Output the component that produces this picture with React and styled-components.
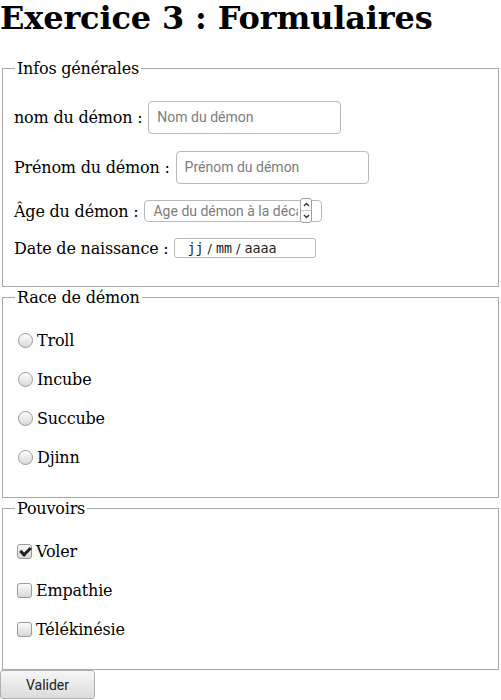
import React from 'react';
import styled, { createGlobalStyle } from 'styled-components';

const GlobalStyle = createGlobalStyle`
  body {
    margin: 0;
    background: #fff;
    color: #000;
    font-family: "DejaVu Serif", serif;
    font-size: 16px;
    letter-spacing: -0.2px;
  }
`;

const Title = styled.h1`
  font-size: 32px;
  font-weight: bold;
  margin: 0 0 21px 0;
  line-height: 37px;
  letter-spacing: -0.15px;
`;

const Fieldset = styled.fieldset`
  margin: 0 2px;
  padding: 5px 12px 12px 11px;
  border: 1px solid #a9a9a9;
  border-radius: 0;
`;

const Legend = styled.legend`
  padding: 0 2px;
  margin-left: 1px;
  font-size: 16px;
  line-height: 21px;
`;

const Line = styled.p`
  margin: 16px 0;
  display: flex;
  align-items: center;
  gap: 6px;
  min-height: ${(p) => p.$h || 20}px;
`;

const Choice = styled.p`
  margin: 16px 0;
  display: flex;
  align-items: center;
  min-height: 23px;
`;

const TextInput = styled.input`
  font-family: "Roboto", "DejaVu Sans", sans-serif;
  font-size: 14px;
  letter-spacing: 0;
  width: ${(p) => p.$w || 193}px;
  height: ${(p) => p.$h || 33}px;
  box-sizing: border-box;
  padding: 0 8px;
  margin: 0;
  border: 1px solid #b8b8b8;
  border-radius: 4px;
  background: #fff;
  color: #222;
  &::placeholder {
    color: #7d7d7d;
  }
`;

const NumberWrap = styled.span`
  position: relative;
  display: inline-flex;
`;

const NumberInput = styled(TextInput)`
  padding: 0 23px 0 8px;
  -moz-appearance: textfield;
  &::-webkit-inner-spin-button,
  &::-webkit-outer-spin-button {
    -webkit-appearance: none;
    margin: 0;
  }
`;

const Spinner = styled.span`
  position: absolute;
  right: 10px;
  top: -2px;
  width: 12px;
  height: 25px;
  display: flex;
  flex-direction: column;
  border: 1px solid #a0a0a0;
  border-radius: 3px;
  background: #fff;
  box-sizing: border-box;
  overflow: hidden;
`;

const SpinHalf = styled.span`
  flex: 1;
  display: flex;
  align-items: center;
  justify-content: center;
  border-top: ${(p) => (p.$down ? '1px solid #c8c8c8' : 'none')};
`;

const DateField = styled.span`
  display: inline-flex;
  align-items: center;
  width: 142px;
  height: 20px;
  box-sizing: border-box;
  padding-left: 12px;
  border: 1px solid #b8b8b8;
  border-radius: 3px;
  background: #fff;
  color: #222;
  font-family: "DejaVu Sans Mono", monospace;
  font-size: 13.33px;
  letter-spacing: 0;
`;

const DateSep = styled.span`
  font-family: "DejaVu Sans", sans-serif;
  font-size: 13px;
  margin: 0 4px;
`;

const Radio = styled.input`
  appearance: none;
  width: 15px;
  height: 15px;
  margin: 0 4px 0 4px;
  border: 1px solid #9a9a9a;
  border-radius: 50%;
  background: linear-gradient(#fdfdfd, #d9d9d9);
  flex: none;
`;

const Check = styled.input`
  appearance: none;
  width: 15px;
  height: 15px;
  margin: 0 4px 0 3px;
  border: 1px solid #9a9a9a;
  border-radius: 3px;
  background: linear-gradient(#fbfbfb, #d8d8d8);
  flex: none;
  position: relative;
  &:checked::after {
    content: '';
    position: absolute;
    left: 4px;
    top: 0px;
    width: 4px;
    height: 8px;
    border: solid #222;
    border-width: 0 3px 3px 0;
    transform: rotate(45deg);
  }
`;

const Submit = styled.button`
  font-family: "Roboto", "DejaVu Sans", sans-serif;
  font-size: 14px;
  width: 95px;
  height: 29px;
  margin: 0;
  border: 1px solid #b0b0b0;
  border-radius: 3px;
  background: linear-gradient(#f6f6f6, #dcdcdc);
  color: #222;
`;

function Chevron({ down }) {
  return (
    <svg width="7" height="5" viewBox="0 0 7 5">
      <path
        d={down ? 'M1 1 L3.5 3.5 L6 1' : 'M1 4 L3.5 1.5 L6 4'}
        fill="none"
        stroke="#333"
        strokeWidth="1.4"
      />
    </svg>
  );
}

export default function App() {
  const races = ['Troll', 'Incube', 'Succube', 'Djinn'];
  const powers = [
    { name: 'Voler', checked: true },
    { name: 'Empathie', checked: false },
    { name: 'Télékinésie', checked: false },
  ];

  return (
    <>
      <GlobalStyle />
      <Title>Exercice 3 : Formulaires</Title>
      <form>
        <Fieldset>
          <Legend>Infos générales</Legend>
          <Line $h={34}>
            nom du démon : <TextInput type="text" placeholder="Nom du démon" />
          </Line>
          <Line $h={34}>
            Prénom du démon : <TextInput type="text" placeholder="Prénom du démon" />
          </Line>
          <Line $h={22}>
            Âge du démon :
            <NumberWrap>
              <NumberInput type="number" $w={178} $h={22} placeholder="Age du démon à la décapitation" />
              <Spinner>
                <SpinHalf><Chevron /></SpinHalf>
                <SpinHalf $down><Chevron down /></SpinHalf>
              </Spinner>
            </NumberWrap>
          </Line>
          <Line $h={20}>
            Date de naissance :
            <DateField>
              jj<DateSep>/</DateSep>mm<DateSep>/</DateSep>aaaa
            </DateField>
          </Line>
        </Fieldset>

        <Fieldset>
          <Legend>Race de démon</Legend>
          {races.map((r) => (
            <Choice key={r}>
              <Radio type="radio" name="race" value={r} />
              {r}
            </Choice>
          ))}
        </Fieldset>

        <Fieldset>
          <Legend>Pouvoirs</Legend>
          {powers.map((p) => (
            <Choice key={p.name}>
              <Check type="checkbox" defaultChecked={p.checked} />
              {p.name}
            </Choice>
          ))}
        </Fieldset>

        <Submit type="submit">Valider</Submit>
      </form>
    </>
  );
}
